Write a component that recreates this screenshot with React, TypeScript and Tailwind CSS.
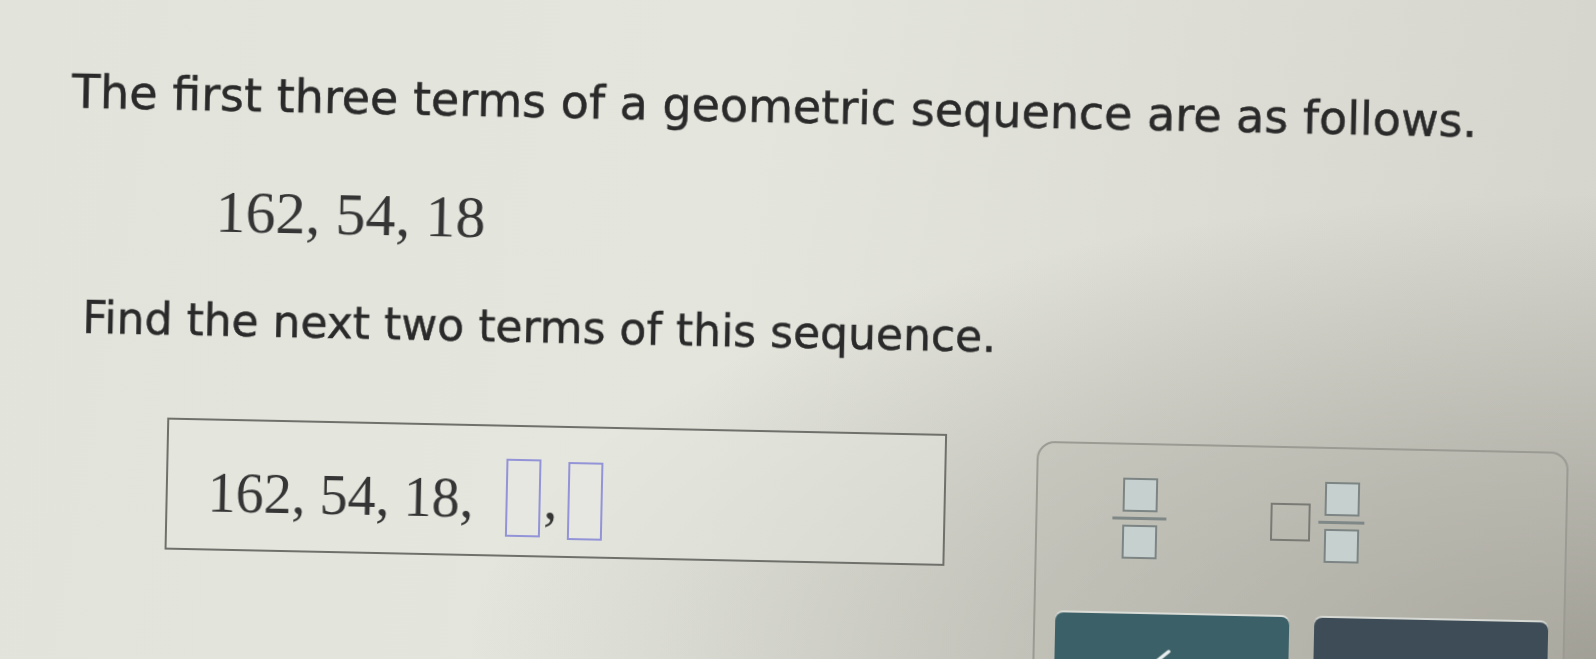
import React from "react";

const FracBox: React.FC = () => (
  <div className="w-[35px] h-[34px] border-2 border-[#7c8583] bg-[#c6d0ce]" />
);

const Fraction: React.FC<{ width: string }> = ({ width }) => (
  <div className={`flex flex-col items-center ${width}`}>
    <FracBox />
    <div className="mt-[5px] h-[3px] w-full bg-[#7f8886]" />
    <div className="mt-[5px]">
      <FracBox />
    </div>
  </div>
);

const AnswerSlot: React.FC<{ top: string }> = ({ top }) => (
  <div className={`${top} w-[35px] h-[78px] border-2 border-[#9393d8] bg-[#e6e7e0]`} />
);

const App: React.FC = () => {
  return (
    <div className="relative w-[1596px] h-[659px] overflow-hidden bg-[radial-gradient(ellipse_at_100%_100%,rgba(110,108,98,0.5),transparent_50%),linear-gradient(100deg,#e2e3db_0%,#e4e5dd_45%,#d5d4cc_100%)]">
      <div className="origin-top-left rotate-[1.2deg] blur-[0.5px] pl-[74px] pt-[67px] text-[#2a2a2a]">
        {/* question text */}
        <h1 className="font-['DejaVu_Sans',sans-serif] text-[46px] leading-[46px] whitespace-nowrap [-webkit-text-stroke:0.5px_#2a2a2a]">
          The first three terms of a geometric sequence are as follows.
        </h1>

        <div className="mt-[64px] ml-[146px] font-['Liberation_Serif',serif] text-[60px] leading-[60px] text-[#353535]">
          162, 54, 18
        </div>

        <p className="mt-[57px] ml-[15px] font-['DejaVu_Sans',sans-serif] text-[44px] leading-[44px] whitespace-nowrap [-webkit-text-stroke:0.5px_#2a2a2a]">
          Find the next two terms of this sequence.
        </p>

        <div className="mt-[76px] flex items-start">
          {/* answer box */}
          <div className="ml-[102px] w-[780px] h-[132px] border-2 border-[#6f706a] bg-[#e6e7e0]/50 pl-[40px] pt-[31px] flex items-start font-['Liberation_Serif',serif] text-[56px] leading-[56px] text-[#353535]">
            <span className="mt-[13px] whitespace-nowrap">162, 54, 18,</span>
            <div className="ml-[32px]">
              <AnswerSlot top="mt-[1px]" />
            </div>
            <span className="mt-[13px] ml-[3px]">,</span>
            <div className="ml-[10px]">
              <AnswerSlot top="mt-[3px]" />
            </div>
          </div>

          {/* answer pad */}
          <div className="ml-[90px] mt-[5px] w-[532px] h-[320px] rounded-t-[18px] border-2 border-[#9b9a93] bg-[#bdbdb3]/30 pl-[75px] pt-[33px]">
            <div className="flex items-start">
              <Fraction width="w-[54px]" />
              <div className="ml-[104px] flex items-center h-[81px]">
                <div className="w-[40px] h-[38px] border-2 border-[#7a7a75]" />
                <div className="ml-[8px]">
                  <Fraction width="w-[46px]" />
                </div>
              </div>
            </div>

            <div className="mt-[55px] -ml-[55px] flex gap-[25px]">
              <button className="relative w-[234px] h-[90px] rounded-[8px] bg-[#3c6067] shadow-[0_-2px_0_#dadcd7]">
                <svg
                  className="absolute left-[92px] top-[33px]"
                  width="30"
                  height="22"
                  viewBox="0 0 30 22"
                  fill="none"
                  stroke="#e8eeee"
                  strokeWidth="3.5"
                  strokeLinecap="round"
                >
                  <path d="M3 20 L22 4" />
                </svg>
              </button>
              <button className="relative w-[234px] h-[90px] rounded-[8px] bg-[#3e4c57] shadow-[0_-2px_0_#d6d8d3]">
                <svg
                  className="absolute left-[86px] top-[34px]"
                  width="30"
                  height="20"
                  viewBox="0 0 30 20"
                  fill="none"
                  stroke="#8a98a0"
                  strokeWidth="3"
                  strokeLinecap="round"
                >
                  <path d="M6 18 A10 10 0 0 1 24 14" />
                </svg>
              </button>
            </div>
          </div>
        </div>
      </div>
    </div>
  );
};

export default App;
